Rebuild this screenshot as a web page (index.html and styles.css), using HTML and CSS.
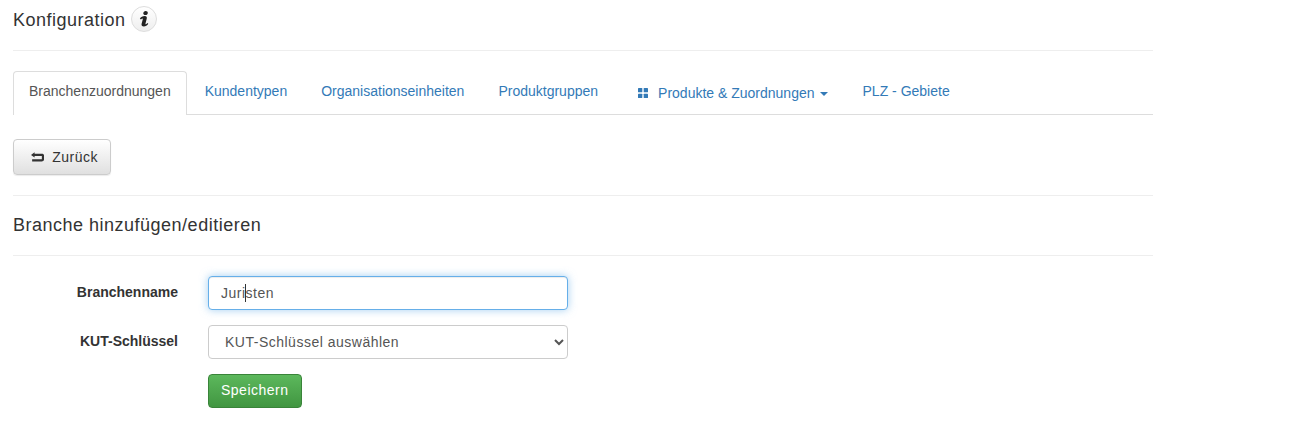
FILE: index.html
```html
<!DOCTYPE html>
<html lang="de">
<head>
<meta charset="utf-8">
<title>Konfiguration</title>
<link rel="stylesheet" href="styles.css">
</head>
<body>
<main class="page">
  <header class="page-title">
    <h1>Konfiguration</h1>
    <span class="info-badge"><svg viewBox="0 0 24 24" width="18" height="20"><path d="M14.200 1.200c1.800 0 2.900 1.100 2.900 2.500 0 1.700-1.500 3.100-3.200 3.100-1.800 0-2.900-1.100-2.900-2.500 0-1.700 1.500-3.100 3.200-3.100zM6.500 11.500c1-1.900 3.800-3.400 6.500-3.400 2.300 0 3.200 1.200 2.700 3.300l-1.700 6.500c-.2.800-.1 1.100.3 1.100.6 0 1.300-.5 2.200-1.600l1.200.9c-1.500 2.400-3.600 3.600-5.900 3.600-2.500 0-3.500-1.300-3-3.500l1.500-5.800c.2-.8.100-1.200-.4-1.200-.5 0-1.200.5-1.900 1.300z" fill="#222"/></svg></span>
  </header>
  <hr class="rule rule-title">
  <nav class="tabs">
    <a class="tab active">Branchenzuordnungen</a>
    <a class="tab">Kundentypen</a>
    <a class="tab">Organisationseinheiten</a>
    <a class="tab">Produktgruppen</a>
    <a class="tab tab-dropdown"><svg class="grid-icon" viewBox="0 0 10 10" width="10" height="10"><rect width="4.300" height="4.300" rx=".6"/><rect x="5.700" width="4.300" height="4.300" rx=".6"/><rect y="5.700" width="4.300" height="4.300" rx=".6"/><rect x="5.700" y="5.700" width="4.300" height="4.300" rx=".6"/></svg>Produkte &amp; Zuordnungen<span class="caret"></span></a>
    <a class="tab tab-last">PLZ - Gebiete</a>
  </nav>
  <div class="toolbar">
    <button class="btn btn-default" type="button"><svg class="back-icon" viewBox="0 0 14 10" width="14" height="10"><path d="M0 2.800 3.800 0v1.500h7.600c1.600 0 2.600 1 2.600 2.500v3.200c0 1.500-1 2.500-2.600 2.500H1.200V7.300h10.300V3.900H3.800v1.700z" fill="#333"/></svg>Zurück</button>
  </div>
  <hr class="rule">
  <h2>Branche hinzufügen/editieren</h2>
  <hr class="rule rule-sub">
  <form class="form">
    <div class="row">
      <label class="label">Branchenname</label>
      <div class="field">
        <input class="control focus" type="text" value="Juristen">
        <span class="text-caret"></span>
      </div>
    </div>
    <div class="row">
      <label class="label">KUT-Schlüssel</label>
      <div class="field">
        <select class="control select"><option>KUT-Schlüssel auswählen</option></select>
      </div>
    </div>
    <div class="row">
      <div class="label"></div>
      <button class="btn btn-success" type="button">Speichern</button>
    </div>
  </form>
</main>
</body>
</html>
```
FILE: styles.css
```css
* { box-sizing: border-box; }
html, body { margin: 0; background: #fff; }
body {
  font-family: "Liberation Sans", Arial, sans-serif;
  font-size: 14px;
  line-height: 20px;
  color: #333;
}
.page { width: 1140px; margin-left: 13px; }
.page-title { display: flex; align-items: center; height: 38px; gap: 5px; padding-top: 2px; }
h1, h2 { margin: 0; font-weight: 400; font-size: 18px; line-height: 20px; letter-spacing: .5px; }
.info-badge {
  width: 26px; height: 26px; border-radius: 50%;
  border: 1px solid #ddd; background: linear-gradient(#fff, #eee);
  display: flex; align-items: center; justify-content: center;
  margin-top: -2px;
}
.rule { border: 0; border-top: 1px solid #eee; margin: 0; }
.rule-title { margin-top: 12px; }
.tabs { display: flex; margin-top: 20px; height: 44px; border-bottom: 1px solid #ddd; width: 1140px; }
.tab { padding: 9px 15px 0; height: 44px; color: #337ab7; border: 1px solid transparent; border-bottom: 0; margin-right: 2px; }
.tab.active { color: #555; border-color: #ddd; background: #fff; border-radius: 4px 4px 0 0; }
.tab-dropdown { display: flex; padding: 11px 16px 0 21px; }
.grid-icon { fill: #337ab7; margin: 5px 10px 0 0; }
.caret { border-top: 4px solid #337ab7; border-left: 4px solid transparent; border-right: 4px solid transparent; margin: 9px 0 0 5px; }
.toolbar { margin-top: 24px; }
.btn { font: inherit; letter-spacing: .5px; height: 36px; border-radius: 4px; padding: 0 12px; display: inline-flex; align-items: center; }
.btn-default { width: 98px; color: #333; border: 1px solid #ccc; background: linear-gradient(#fff, #e0e0e0); box-shadow: 0 1px 1px rgba(0,0,0,.08); padding-left: 17px; }
.back-icon { margin-right: 8px; }
.toolbar + .rule { margin-top: 20px; }
h2 { margin-top: 19px; }
.rule-sub { margin-top: 20px; }
.form { margin-top: 20px; }
.row { display: flex; margin-bottom: 15px; }
.label { width: 165px; font-weight: 700; text-align: right; padding-top: 6px; margin-right: 30px; }
.field { position: relative; width: 360px; }
.control {
  display: block; width: 360px; height: 34px; padding: 6px 12px;
  font: 14px/20px "Liberation Sans", Arial, sans-serif; letter-spacing: .5px; color: #555;
  background: #fff; border: 1px solid #ccc; border-radius: 4px; outline: 0;
}
.focus { border-color: #66afe9; box-shadow: inset 0 1px 1px rgba(0,0,0,.075), 0 0 8px rgba(102,175,233,.6); }
.text-caret { position: absolute; left: 37px; top: 8px; height: 18px; width: 1px; background: #333; }
.btn-success { height: 34px; color: #fff; border: 1px solid #398439; background: linear-gradient(#5cb85c, #419641); width: 94px; padding: 0 12px 2px; }
```
